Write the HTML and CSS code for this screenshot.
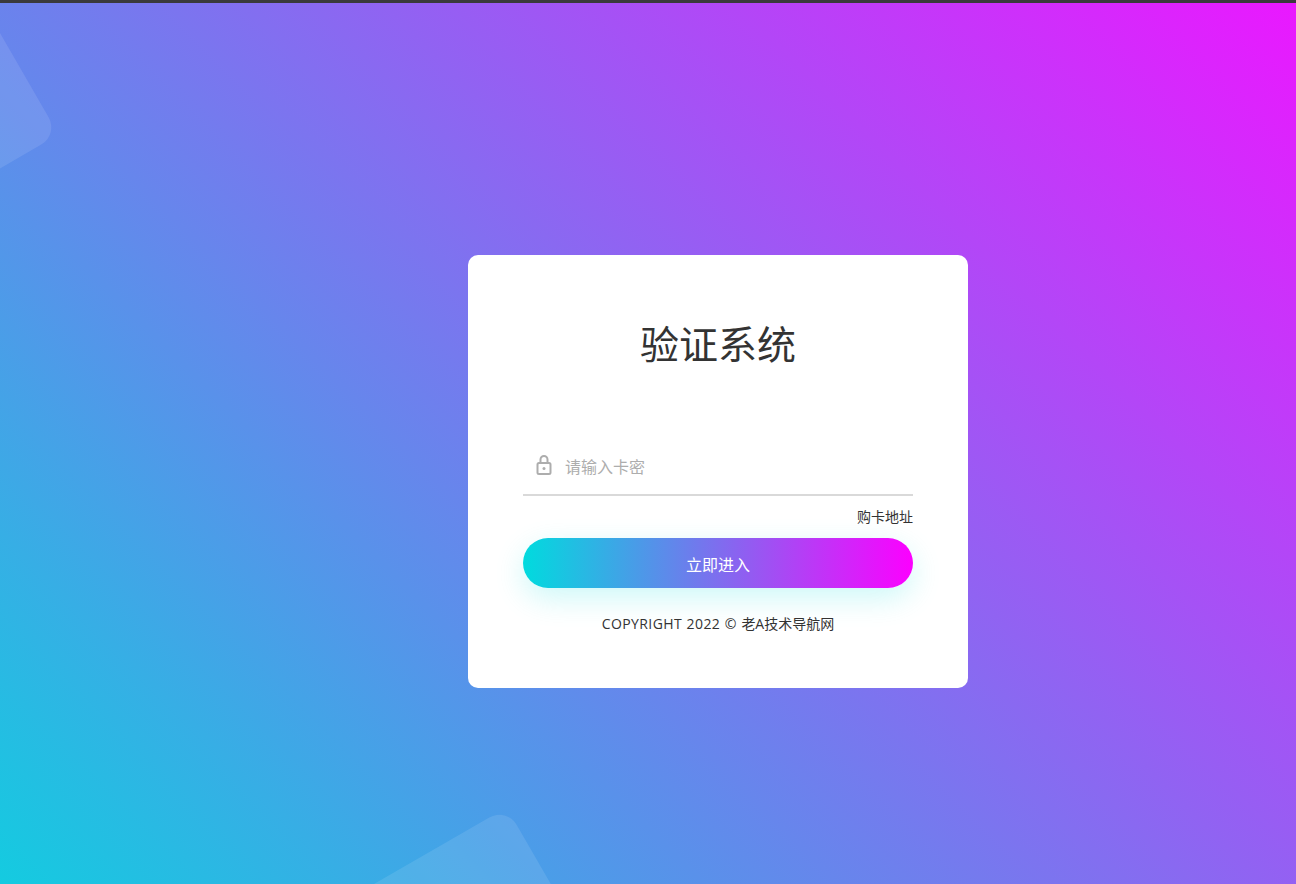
FILE: index.html
```html
<!DOCTYPE html>
<html lang="zh-CN">
<head>
    <meta charset="UTF-8">
    <meta name="viewport" content="width=device-width, initial-scale=1.0">
    <title>验证系统</title>
    <link rel="stylesheet" href="styles.css">
</head>
<body>

    <div class="top-bar"></div>

    <div class="page">
        <div class="shape shape-top"></div>
        <div class="shape shape-bottom"></div>

        <form class="login-card">
            <h1 class="login-title">验证系统</h1>

            <div class="input-wrap">
                <svg class="input-icon" width="16" height="20" viewBox="0 0 16 20" fill="none" aria-hidden="true">
                    <rect x="1.5" y="8" width="13" height="11" rx="1.5" stroke="#adadad" stroke-width="2"/>
                    <path d="M4.5 8V4.5a3.5 3.5 0 0 1 7 0V8" stroke="#adadad" stroke-width="2"/>
                    <circle cx="8" cy="13.5" r="1.5" fill="#adadad"/>
                </svg>
                <input class="card-input" type="text" placeholder="请输入卡密">
            </div>

            <div class="buy-row">
                <a class="buy-link" href="#">购卡地址</a>
            </div>

            <button class="enter-button" type="button">立即进入</button>

            <p class="copyright"><span class="copyright-en">COPYRIGHT 2022 © </span>老A技术导航网</p>
        </form>
    </div>

</body>
</html>
```

FILE: styles.css
```css
* {
    box-sizing: border-box;
}

body {
    font-family: 'Open Sans', 'Noto Sans CJK SC', sans-serif;
    color: #333;
    margin: 0;
    padding: 0;
}

.top-bar {
    height: 3px;
    background-color: #3a3a3c;
}

.page {
    position: relative;
    height: 881px;
    overflow: hidden;
    display: flex;
    justify-content: center;
    align-items: flex-start;
    padding: 252px 0 0 140px;
    background: linear-gradient(45deg, #14cbe0, #ea18ff);
}

/* Faint rotated squares behind the card */
.shape {
    position: absolute;
    width: 200px;
    height: 200px;
    border-radius: 20px;
    background-color: rgba(255, 255, 255, 0.1);
    transform: rotate(-30deg);
}

.shape-top {
    left: -178px;
    top: -5px;
}

.shape-bottom {
    left: 370px;
    top: 841px;
}

.login-card {
    position: relative;
    width: 500px;
    height: 433px;
    padding: 64px 55px 0;
    background-color: #fff;
    border-radius: 10px;
}

.login-title {
    margin: 0 0 75px;
    font-family: 'Noto Sans CJK SC', sans-serif;
    font-size: 39px;
    font-weight: 400;
    line-height: 47px;
    text-align: center;
    color: #333;
}

.input-wrap {
    display: flex;
    align-items: center;
    height: 55px;
    border-bottom: 2px solid #d9d9d9;
}

.input-icon {
    flex: none;
    margin: 0 13px 5px 13px;
}

.card-input {
    flex: 1;
    min-width: 0;
    height: 49px;
    padding: 0;
    margin-bottom: 4px;
    border: none;
    outline: none;
    background: transparent;
    font-family: 'Noto Sans CJK SC', sans-serif;
    font-size: 16px;
    color: #333;
}

.card-input::placeholder {
    color: #adadad;
    opacity: 1;
}

.buy-row {
    margin-top: 9px;
    height: 33px;
    text-align: right;
}

.buy-link {
    font-family: 'Noto Sans CJK SC', sans-serif;
    font-size: 14px;
    line-height: 22px;
    color: #333;
    text-decoration: none;
}

.enter-button {
    display: block;
    width: 100%;
    height: 50px;
    padding: 2px 0 0;
    border: none;
    border-radius: 25px;
    background: linear-gradient(to right, #00dbde, #fc00ff);
    box-shadow: 0 10px 30px 0 rgba(0, 219, 222, 0.2);
    font-family: 'Noto Sans CJK SC', sans-serif;
    font-size: 16px;
    color: #fff;
    cursor: pointer;
}

.copyright {
    margin: 25px 0 0;
    font-size: 14px;
    line-height: 22px;
    text-align: center;
    color: #333;
}

.copyright-en {
    letter-spacing: 0.4px;
    word-spacing: 0.5px;
}
```
